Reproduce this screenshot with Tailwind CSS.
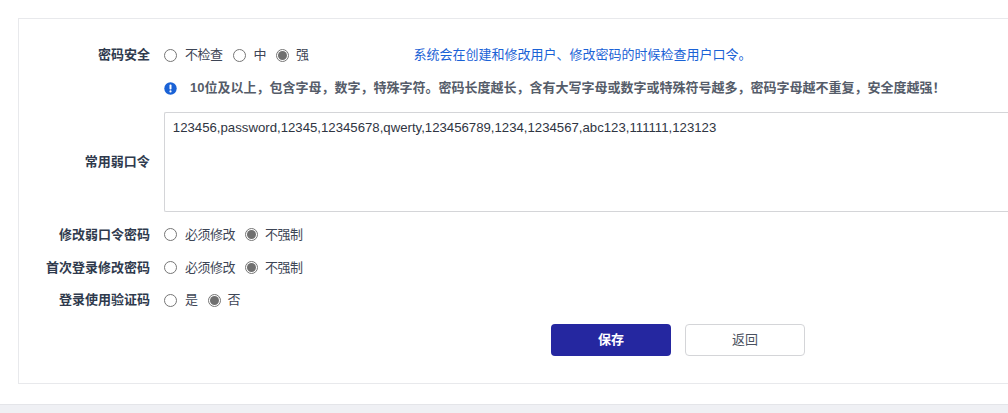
<!DOCTYPE html>
<html lang="zh">
<head>
<meta charset="utf-8">
<script src="https://cdn.jsdelivr.net/npm/@tailwindcss/browser@4"></script>
</head>
<body class="w-[1008px] h-[413px] overflow-hidden bg-[#eff0f4] font-['Liberation_Sans','Noto_Sans_CJK_SC',sans-serif] text-[13px] text-[#3d4555]">
<div class="h-[405px] bg-white border-b border-[#e4e5e9] pt-[18px] pl-[18px]">
<div class="h-[366px] w-[990px] border border-r-0 border-[#e8e9ec] pt-[20px]">

<div class="flex items-center h-[32px]">
<div class="w-[131px] text-right font-semibold text-[#2f3a4d]">密码安全</div>
<div class="ml-[14px] flex items-center tracking-[-0.5px]">
<span class="w-[13px] h-[13px] rounded-full border border-[#767676] bg-white"></span><span class="ml-[8px]">不检查</span>
<span class="ml-[10px] w-[13px] h-[13px] rounded-full border border-[#767676] bg-white"></span><span class="ml-[8px]">中</span>
<span class="ml-[10px] w-[13px] h-[13px] rounded-full border border-[#767676] bg-white flex items-center justify-center"><span class="w-[9px] h-[9px] rounded-full bg-[#6f6f6f]"></span></span><span class="ml-[7px]">强</span>
<span class="ml-[105px] tracking-normal text-[#1a62d6]">系统会在创建和修改用户、修改密码的时候检查用户口令。</span>
</div>
</div>

<div class="flex items-center h-[34px] ml-[145px]">
<svg class="w-[13px] h-[13px]" viewBox="0 0 13 13"><circle cx="6.5" cy="6.5" r="6.2" fill="#1a62d6"/><rect x="5.5" y="2.6" width="2" height="5" rx="0.8" fill="#fff"/><circle cx="6.5" cy="9.4" r="1.1" fill="#fff"/></svg>
<span class="ml-[13px] font-bold text-[13px] text-[#555c69]">10位及以上，包含字母，数字，特殊字符。密码长度越长，含有大写字母或数字或特殊符号越多，密码字母越不重复，安全度越强！</span>
</div>

<div class="flex items-center mt-[7px]">
<div class="w-[131px] text-right font-semibold text-[#2f3a4d]">常用弱口令</div>
<div class="ml-[14px] w-[845px] h-[100px] rounded-l-[2px] border border-r-0 border-[#d4d5d8] px-[8px] pt-[6px] text-[13.2px] leading-[18px] text-[#2f3542]">123456,password,12345,12345678,qwerty,123456789,1234,1234567,abc123,111111,123123</div>
</div>

<div class="flex items-center h-[33px] mt-[6px]">
<div class="w-[131px] text-right font-semibold text-[#2f3a4d]">修改弱口令密码</div>
<div class="ml-[14px] flex items-center tracking-[-0.5px]">
<span class="w-[13px] h-[13px] rounded-full border border-[#767676] bg-white"></span><span class="ml-[8px]">必须修改</span>
<span class="ml-[10px] w-[13px] h-[13px] rounded-full border border-[#767676] bg-white flex items-center justify-center"><span class="w-[9px] h-[9px] rounded-full bg-[#6f6f6f]"></span></span><span class="ml-[7px]">不强制</span>
</div>
</div>

<div class="flex items-center h-[33px]">
<div class="w-[131px] text-right font-semibold text-[#2f3a4d]">首次登录修改密码</div>
<div class="ml-[14px] flex items-center tracking-[-0.5px]">
<span class="w-[13px] h-[13px] rounded-full border border-[#767676] bg-white"></span><span class="ml-[8px]">必须修改</span>
<span class="ml-[10px] w-[13px] h-[13px] rounded-full border border-[#767676] bg-white flex items-center justify-center"><span class="w-[9px] h-[9px] rounded-full bg-[#6f6f6f]"></span></span><span class="ml-[7px]">不强制</span>
</div>
</div>

<div class="flex items-center h-[32px]">
<div class="w-[131px] text-right font-semibold text-[#2f3a4d]">登录使用验证码</div>
<div class="ml-[14px] flex items-center tracking-[-0.5px]">
<span class="w-[13px] h-[13px] rounded-full border border-[#767676] bg-white"></span><span class="ml-[8px]">是</span>
<span class="ml-[10px] w-[13px] h-[13px] rounded-full border border-[#767676] bg-white flex items-center justify-center"><span class="w-[9px] h-[9px] rounded-full bg-[#6f6f6f]"></span></span><span class="ml-[7px]">否</span>
</div>
</div>

<div class="flex ml-[532px] mt-[8px] gap-[14px]">
<button class="w-[120px] h-[32px] rounded-[4px] bg-[#2527a0] text-white font-semibold">保存</button>
<button class="w-[120px] h-[32px] rounded-[4px] bg-white border border-[#d4d5d8] text-[#4a5160]">返回</button>
</div>

</div>
</div>
</body>
</html>
